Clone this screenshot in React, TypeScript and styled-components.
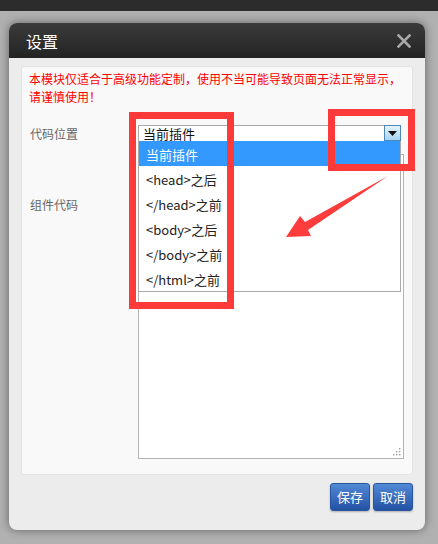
import React from 'react'
import styled, { createGlobalStyle } from 'styled-components'

const GlobalStyle = createGlobalStyle`
	html, body {
		margin: 0;
		padding: 0;
		background: #b1b1b1;
		font-family: 'Noto Sans CJK SC', 'Noto Sans', sans-serif;
	}
`

const options = ['当前插件', '<head>之后', '</head>之前', '<body>之后', '</body>之前', '</html>之前']

export default function App() {
	return (
		<Page>
			<GlobalStyle />
			<TopBar />
			<Backdrop>
				<Modal>
					<Header>
						<Title>设置</Title>
						<CloseIcon />
					</Header>
					<Panel>
						<Warning>
							本模块仅适合于高级功能定制，使用不当可能导致页面无法正常显示，
							<br />
							请谨慎使用！
						</Warning>
						<FormRow>
							<Label>代码位置</Label>
							<SelectWrap>
								<SelectBox>当前插件</SelectBox>
								<ArrowButton>
									<svg width='9' height='5' viewBox='0 0 9 5'>
										<path d='M0 0 H9 L4.5 5 Z' fill='#111' />
									</svg>
								</ArrowButton>
								<OptionList>
									{options.map((o, i) => (
										<OptionItem key={o} $active={i === 0}>
											{o}
										</OptionItem>
									))}
								</OptionList>
							</SelectWrap>
						</FormRow>
						<FormRow $top={12}>
							<Label $offset={42}>组件代码</Label>
							<CodeArea>
								<Grip />
							</CodeArea>
						</FormRow>
					</Panel>
					<Footer>
						<Button>保存</Button>
						<Button>取消</Button>
					</Footer>
				</Modal>
			</Backdrop>
			<Annotations />
		</Page>
	)
}

function CloseIcon() {
	return (
		<CloseWrap>
			<svg width='14' height='14' viewBox='0 0 14 14'>
				<path
					d='M1.5 1.5 L12.5 12.5 M12.5 1.5 L1.5 12.5'
					stroke='#a8a8a8'
					strokeWidth='2.6'
					strokeLinecap='square'
				/>
			</svg>
		</CloseWrap>
	)
}

function Grip() {
	return (
		<GripIcon width='8' height='8' viewBox='0 0 8 8'>
			<g fill='#9a9a9a'>
				<rect x='6' y='0' width='1.4' height='1.4' />
				<rect x='3' y='3' width='1.4' height='1.4' />
				<rect x='6' y='3' width='1.4' height='1.4' />
				<rect x='0' y='6' width='1.4' height='1.4' />
				<rect x='3' y='6' width='1.4' height='1.4' />
				<rect x='6' y='6' width='1.4' height='1.4' />
			</g>
		</GripIcon>
	)
}

function Annotations() {
	return (
		<>
			<RedBox style={{ left: 129, top: 112, width: 105, height: 197 }} />
			<RedBox style={{ left: 328, top: 109, width: 87, height: 62 }} />
			<ArrowSvg width='438' height='544' viewBox='0 0 438 544'>
				<polygon
					points='286,237 300,216 305,222 388,176 308,230 311,236'
					fill='#fd3c3c'
				/>
			</ArrowSvg>
		</>
	)
}

const Page = styled.div`
	position: relative;
	width: 438px;
	height: 544px;
	overflow: hidden;
`

const TopBar = styled.div`
	height: 11px;
	background: #2c2c2c;
`

const Backdrop = styled.div`
	padding: 12px 0 0 9px;
`

const Modal = styled.div`
	width: 416px;
	height: 507px;
	border-radius: 8px;
	background: #ececec;
	box-shadow: 0 0 10px rgba(0, 0, 0, 0.45);
	overflow: hidden;
	display: flex;
	flex-direction: column;
`

const Header = styled.div`
	height: 35px;
	background: linear-gradient(#3b3b3b, #232323);
	display: flex;
	align-items: center;
	justify-content: space-between;
	padding: 0 14px 0 17px;
`

const Title = styled.div`
	color: #fff;
	font-size: 16px;
	line-height: 20px;
`

const CloseWrap = styled.div`
	display: flex;
	margin-top: 1px;
`

const Panel = styled.div`
	margin: 8px 12px 0;
	height: 409px;
	box-sizing: border-box;
	background: #f9f9f9;
	border: 1px solid #e2e2e2;
	border-radius: 3px;
	padding: 3px 0 0 7px;
`

const Warning = styled.div`
	color: #f00;
	font-size: 12px;
	line-height: 18px;
	white-space: nowrap;
`

const FormRow = styled.div<{ $top?: number }>`
	display: flex;
	margin-top: ${(p) => p.$top ?? 19}px;
`

const Label = styled.div<{ $offset?: number }>`
	width: 108px;
	padding-left: 1px;
	padding-top: ${(p) => p.$offset ?? 0}px;
	color: #666;
	font-size: 12px;
	line-height: 17px;
`

const SelectWrap = styled.div`
	position: relative;
	width: 262px;
	height: 17px;
`

const SelectBox = styled.div`
	box-sizing: border-box;
	height: 17px;
	border: 1px solid #aaa;
	background: #fff;
	padding-left: 4px;
	font-size: 13px;
	line-height: 16px;
	color: #111;
`

const ArrowButton = styled.div`
	position: absolute;
	top: 0;
	right: -1px;
	width: 17px;
	height: 16px;
	box-sizing: border-box;
	border: 1px solid #4d86b8;
	background: linear-gradient(#e6f3fc, #a7d3f1);
	display: flex;
	align-items: center;
	justify-content: center;
`

const OptionList = styled.div`
	position: absolute;
	top: 16px;
	left: 0;
	width: 263px;
	box-sizing: border-box;
	border: 1px solid #aaa;
	border-top: none;
	background: #fff;
	z-index: 2;
`

const OptionItem = styled.div<{ $active?: boolean }>`
	height: 25px;
	line-height: 27px;
	padding-left: 7px;
	font-size: 13px;
	color: ${(p) => (p.$active ? '#fff' : '#222')};
	background: ${(p) => (p.$active ? '#3399ff' : '#fff')};
`

const CodeArea = styled.div`
	position: relative;
	width: 266px;
	height: 305px;
	box-sizing: border-box;
	border: 1px solid #b3b3b3;
	background: #fff;
`

const GripIcon = styled.svg`
	position: absolute;
	right: 2px;
	bottom: 2px;
`

const Footer = styled.div`
	display: flex;
	justify-content: flex-end;
	gap: 3px;
	padding: 8px 12px 0;
`

const Button = styled.div`
	width: 40px;
	height: 28px;
	box-sizing: border-box;
	border-radius: 3px;
	border: 1px solid #2a56a0;
	background: linear-gradient(#5089d6, #2352a5);
	box-shadow: 0 1px 2px rgba(0, 0, 0, 0.25);
	color: #fff;
	font-size: 13px;
	line-height: 26px;
	text-align: center;
`

const RedBox = styled.div`
	position: absolute;
	box-sizing: border-box;
	border: 7px solid #fd3a3a;
	z-index: 5;
`

const ArrowSvg = styled.svg`
	position: absolute;
	left: 0;
	top: 0;
	z-index: 5;
	pointer-events: none;
`
